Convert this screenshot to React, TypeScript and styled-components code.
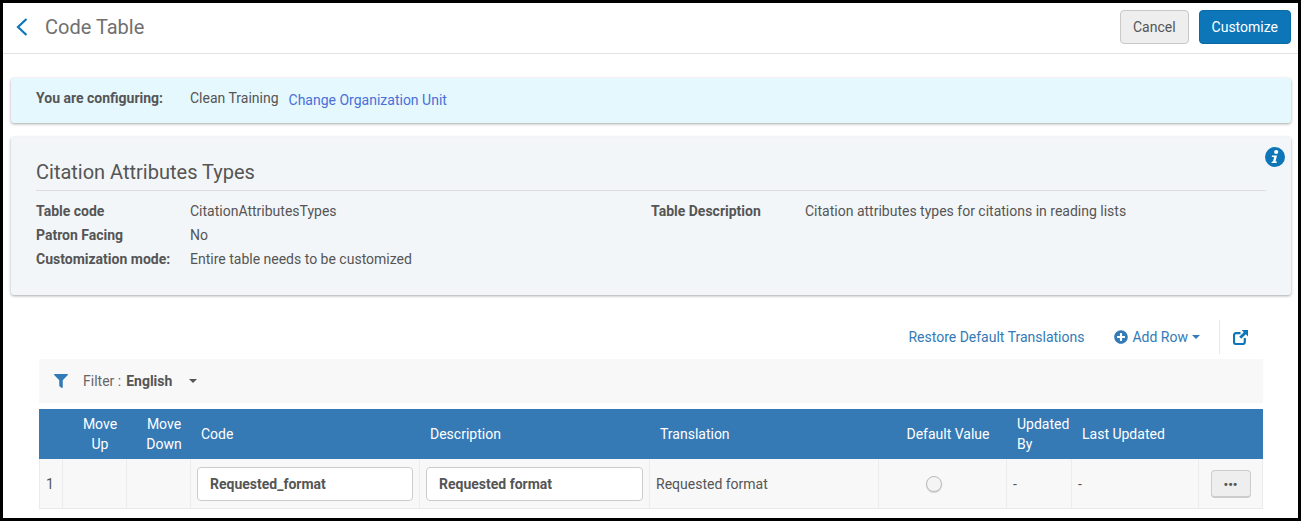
import React from 'react'
import styled, { createGlobalStyle } from 'styled-components'
import { FaFilter, FaPlusCircle } from 'react-icons/fa'

const GlobalStyle = createGlobalStyle`
    html, body {
        margin: 0;
        padding: 0;
        background: #fff;
    }
    * {
        box-sizing: border-box;
    }
    a {
        text-decoration: none;
    }
`

// page frame
const Frame = styled.div`
    width: 1301px;
    height: 521px;
    border: 3px solid #000;
    overflow: hidden;
    background: #fff;
    font-family: Roboto, 'Liberation Sans', sans-serif;
    font-size: 14px;
    color: #555;
`

const Header = styled.header`
    height: 51px;
    border-bottom: 1px solid #e2e2e2;
    display: flex;
    align-items: center;
    padding: 0 7px 2px 12px;
`

const BackLink = styled.a`
    display: flex;
    color: #0d76b8;
    margin-right: 16px;
`

const PageTitle = styled.h1`
    margin: 0;
    font-size: 20px;
    font-weight: 400;
    color: #707070;
    flex: 1;
`

const Button = styled.button<{ $primary?: boolean }>`
    height: 34px;
    padding: 0 12px;
    margin-left: 10px;
    border-radius: 4px;
    font-family: inherit;
    font-size: 14px;
    border: 1px solid ${({ $primary }) => ($primary ? '#0a6aa6' : '#c8c8c8')};
    background: ${({ $primary }) => ($primary ? '#0d76b8' : '#eeeeee')};
    color: ${({ $primary }) => ($primary ? '#fff' : '#555')};
`

const Content = styled.main`
    padding: 24px 7px 0 8px;
    display: flex;
    flex-direction: column;
    gap: 14px;
`

const Banner = styled.section`
    height: 45px;
    background: #e5f8fe;
    border-radius: 3px;
    box-shadow: 0 1px 3px rgba(0, 0, 0, 0.35);
    display: flex;
    align-items: center;
    padding: 0 25px 2px;
`

const Label = styled.span`
    display: block;
    width: 154px;
    flex-shrink: 0;
    font-weight: 700;
    color: #555;
`

const BannerValue = styled.span`
    margin-right: 10px;
    position: relative;
    top: -2px;
`

const OrgLink = styled.a`
    color: #4a6fd8;
`

const BannerLabel = styled(Label)`
    position: relative;
    top: -2px;
`

const InfoCard = styled.section`
    position: relative;
    height: 158px;
    background: #f3f6f8;
    border-radius: 3px;
    box-shadow: 0 1px 3px rgba(0, 0, 0, 0.35);
    padding: 22px 25px 0;
`

const InfoBadge = styled.span`
    position: absolute;
    top: 10px;
    right: 6px;
    display: flex;
    color: #0d76b8;
`

const CardTitle = styled.h2`
    margin: 0;
    height: 32px;
    font-size: 20px;
    line-height: 26px;
    font-weight: 400;
    color: #555;
    border-bottom: 1px solid #dcdcdc;
`

const Details = styled.div`
    display: grid;
    grid-template-columns: 615px 1fr;
    padding-top: 8px;
`

const DetailRow = styled.div`
    display: flex;
    height: 24px;
    line-height: 24px;
`

const TableSection = styled.section`
    padding: 23px 35px 0 36px;
`

const Toolbar = styled.div`
    height: 38px;
    display: flex;
    align-items: center;
    justify-content: flex-end;
    color: #337ab7;
`

const ToolbarLink = styled.a<{ $wide?: boolean }>`
    display: flex;
    align-items: center;
    gap: 4px;
    color: #337ab7;
    margin-right: ${({ $wide }) => ($wide ? '30px' : '19px')};
`

const Caret = styled.span<{ $color?: string }>`
    display: inline-block;
    width: 0;
    height: 0;
    border-left: 4px solid transparent;
    border-right: 4px solid transparent;
    border-top: 4px solid ${({ $color }) => $color || '#337ab7'};
`

const ToolbarDivider = styled.div`
    width: 1px;
    height: 34px;
    background: #e8e8e8;
    margin-right: 13px;
`

const ExportLink = styled.a`
    display: flex;
    color: #0d76b8;
    margin-right: 15px;
`

const FilterBar = styled.div`
    margin-top: 3px;
    height: 44px;
    background: #f8f8f8;
    display: flex;
    align-items: center;
    padding-left: 15px;
    color: #666;
`

const FilterIcon = styled.span`
    display: flex;
    color: #337ab7;
    margin-right: 15px;
`

const FilterValue = styled.strong`
    color: #555;
    margin-left: 5px;
    margin-right: 17px;
`

const COLUMNS = '24px 64px 64px 229px 230px 229px 128px 65px 127px 64px'

const Row = styled.div`
    display: grid;
    grid-template-columns: ${COLUMNS};
    height: 50px;
`

const HeadRow = styled(Row)`
    margin-top: 6px;
    background: #3579b5;
    color: #fff;
`

const HeadCell = styled.div<{ $center?: boolean }>`
    display: flex;
    align-items: center;
    padding: ${({ $center }) => ($center ? '0 0 0 10px' : '0 10px')};
    line-height: 20px;
    justify-content: ${({ $center }) => ($center ? 'center' : 'flex-start')};
    text-align: ${({ $center }) => ($center ? 'center' : 'left')};
`

const BodyRow = styled(Row)`
    background: #f8f8f8;
    border-bottom: 1px solid #eaeaea;
    box-shadow: inset 1px 0 0 #eaeaea;
`

const Cell = styled.div<{ $center?: boolean }>`
    display: flex;
    align-items: center;
    padding: 0 6px;
    border-right: 1px solid #ececec;
    justify-content: ${({ $center }) => ($center ? 'center' : 'flex-start')};
`

const IndexCell = styled(Cell)`
    padding-left: 7px;
`

const TextInput = styled.div`
    width: 100%;
    height: 34px;
    line-height: 32px;
    padding: 0 12px;
    background: #fff;
    border: 1px solid #ccc;
    border-radius: 4px;
    font-weight: 700;
    color: #555;
`

const Radio = styled.span`
    width: 16px;
    height: 16px;
    margin-right: 18px;
    border-radius: 50%;
    border: 1px solid #bbb;
    background: #f4f4f4;
    box-shadow: 0 1px 1px rgba(0, 0, 0, 0.15);
`

const MoreButton = styled.button`
    width: 40px;
    height: 28px;
    padding: 3px 0 0;
    border: 1px solid #ccc;
    border-bottom-width: 2px;
    border-radius: 4px;
    background: #eee;
    color: #555;
    font-size: 13px;
    font-weight: 700;
    font-family: inherit;
    line-height: 1;
`

const headers: { label: string; center?: boolean }[] = [
    { label: '' },
    { label: 'Move Up', center: true },
    { label: 'Move Down', center: true },
    { label: 'Code' },
    { label: 'Description' },
    { label: 'Translation' },
    { label: 'Default Value', center: true },
    { label: 'Updated By' },
    { label: 'Last Updated' },
    { label: '' },
]

const App = () => {
    return (
        <Frame>
            <GlobalStyle />
            <Header>
                <BackLink href="#">
                    <svg width="14" height="20" viewBox="0 0 14 20" fill="none" stroke="currentColor" strokeWidth="2.2">
                        <path d="M11.5 2 3 10l8.5 8" />
                    </svg>
                </BackLink>
                <PageTitle>Code Table</PageTitle>
                <Button>Cancel</Button>
                <Button $primary>Customize</Button>
            </Header>
            <Content>
                <Banner>
                    <BannerLabel>You are configuring:</BannerLabel>
                    <BannerValue>Clean Training</BannerValue>
                    <OrgLink href="#">Change Organization Unit</OrgLink>
                </Banner>
                <InfoCard>
                    <InfoBadge>
                        <svg width="20" height="20" viewBox="0 0 20 20">
                            <circle cx="10" cy="10" r="10" fill="currentColor" />
                            <circle cx="11.2" cy="5" r="2.1" fill="#fff" />
                            <path d="M7 8.4h5l-1.5 6.2h1.4l-.4 1.5H6.5l.4-1.5h1.2l1-4.7H6.7z" fill="#fff" />
                        </svg>
                    </InfoBadge>
                    <CardTitle>Citation Attributes Types</CardTitle>
                    <Details>
                        <div>
                            <DetailRow>
                                <Label>Table code</Label>
                                CitationAttributesTypes
                            </DetailRow>
                            <DetailRow>
                                <Label>Patron Facing</Label>
                                No
                            </DetailRow>
                            <DetailRow>
                                <Label>Customization mode:</Label>
                                Entire table needs to be customized
                            </DetailRow>
                        </div>
                        <div>
                            <DetailRow>
                                <Label>Table Description</Label>
                                Citation attributes types for citations in reading lists
                            </DetailRow>
                        </div>
                    </Details>
                </InfoCard>
            </Content>
            <TableSection>
                <Toolbar>
                    <ToolbarLink href="#" $wide>Restore Default Translations</ToolbarLink>
                    <ToolbarLink href="#">
                        <FaPlusCircle size={14} />
                        Add Row
                        <Caret />
                    </ToolbarLink>
                    <ToolbarDivider />
                    <ExportLink href="#">
                        <svg width="15" height="15" viewBox="0 0 15 15" fill="none">
                            <path d="M7.5 3.2H3a2 2 0 0 0-2 2V12a2 2 0 0 0 2 2h6.8a2 2 0 0 0 2-2V8" stroke="currentColor" strokeWidth="2.2" />
                            <path d="M8.6 0H15v6.4l-2.2-2.2-4.6 4.6-2-2 4.6-4.6z" fill="currentColor" />
                        </svg>
                    </ExportLink>
                </Toolbar>
                <FilterBar>
                    <FilterIcon>
                        <FaFilter size={14} />
                    </FilterIcon>
                    Filter :
                    <FilterValue>English</FilterValue>
                    <Caret $color="#555" />
                </FilterBar>
                <HeadRow>
                    {headers.map((h, i) => (
                        <HeadCell key={i} $center={h.center}>{h.label}</HeadCell>
                    ))}
                </HeadRow>
                <BodyRow>
                    <IndexCell>1</IndexCell>
                    <Cell />
                    <Cell />
                    <Cell><TextInput>Requested_format</TextInput></Cell>
                    <Cell><TextInput>Requested format</TextInput></Cell>
                    <Cell>Requested format</Cell>
                    <Cell $center><Radio /></Cell>
                    <Cell>-</Cell>
                    <Cell>-</Cell>
                    <Cell $center><MoreButton>•••</MoreButton></Cell>
                </BodyRow>
            </TableSection>
        </Frame>
    )
}

export default App
